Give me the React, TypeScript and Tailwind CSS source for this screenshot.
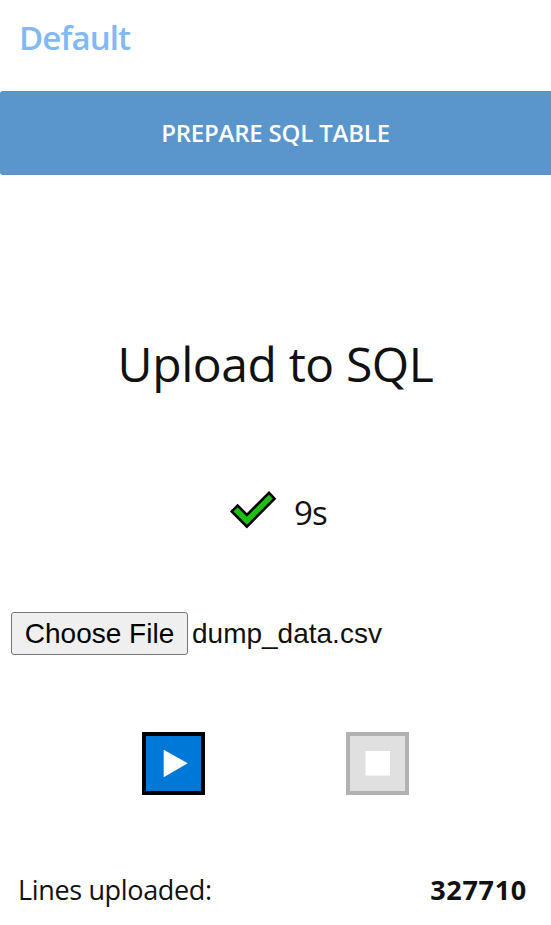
const CheckIcon = () => (
  <svg width="50" height="42" viewBox="0 0 50 42" aria-hidden="true">
    <path
      d="M3.8 20.4 L9.6 14.6 L18.9 23.9 L41 1.9 L46.5 7.7 L18.9 35.6 Z"
      fill="#1dc011"
      stroke="#000"
      strokeWidth="2.6"
    />
  </svg>
);

const App = () => (
  <div className="min-h-[925px] bg-white font-['Open_Sans',sans-serif] text-[#111]">
    <header className="h-[91px] px-[19px]">
      <a href="#" className="block text-[33px] leading-[76px] font-semibold text-[#7fbaf5]">
        <span className="tracking-[-0.9px]">Default</span>
      </a>
    </header>

    <button className="flex h-[84px] w-full items-center justify-center rounded-l-[3px] border-y border-[#5a90c5] bg-[#5a95cb] text-[24px] font-semibold text-white">
      <span className="tracking-[-0.2px]">PREPARE SQL TABLE</span>
    </button>

    <main>
      <h1 className="mt-[149px] text-center text-[48px] leading-[80px] font-normal">
        <span className="tracking-[-0.4px]">Upload to SQL</span>
      </h1>

      <div className="mt-[78px] flex h-[60px] items-center pl-[228px]">
        <CheckIcon />
        <span className="ml-[16px] pt-px text-[33px] leading-[60px] tracking-[-0.8px]">9s</span>
      </div>

      <div className="mt-[70px] flex items-center gap-1 pl-[11px] font-['Liberation_Sans',Arial,sans-serif] text-[28px] leading-[43px]">
        <button className="flex h-[43px] w-[177px] items-center justify-center rounded-[3px] border border-[#767676] bg-[#efefef] text-black">
          Choose File
        </button>
        <span>dump_data.csv</span>
      </div>

      <div className="mt-[77px] flex gap-[141px] pl-[142px]">
        <button aria-label="Start" className="size-[63px] border-4 border-black bg-[#0078d7]">
          <svg width="55" height="55" viewBox="0 0 55 55">
            <path d="M17.7 13.7 L41.7 27.3 L17.7 41.2 Z" fill="#fff" />
          </svg>
        </button>
        <button aria-label="Stop" disabled className="size-[63px] border-4 border-[#b2b2b2] bg-[#e0e0e0]">
          <svg width="55" height="55" viewBox="0 0 55 55">
            <rect x="15.5" y="15" width="24.5" height="24.5" fill="#fff" />
          </svg>
        </button>
      </div>

      <div className="mt-[75px] flex h-[40px] items-center justify-between pr-[24px] pl-[18px] text-[27px]">
        <span className="tracking-[-0.35px]">Lines uploaded:</span>
        <span className="font-bold tracking-[0.7px]">327710</span>
      </div>
    </main>
  </div>
);

export default App;
